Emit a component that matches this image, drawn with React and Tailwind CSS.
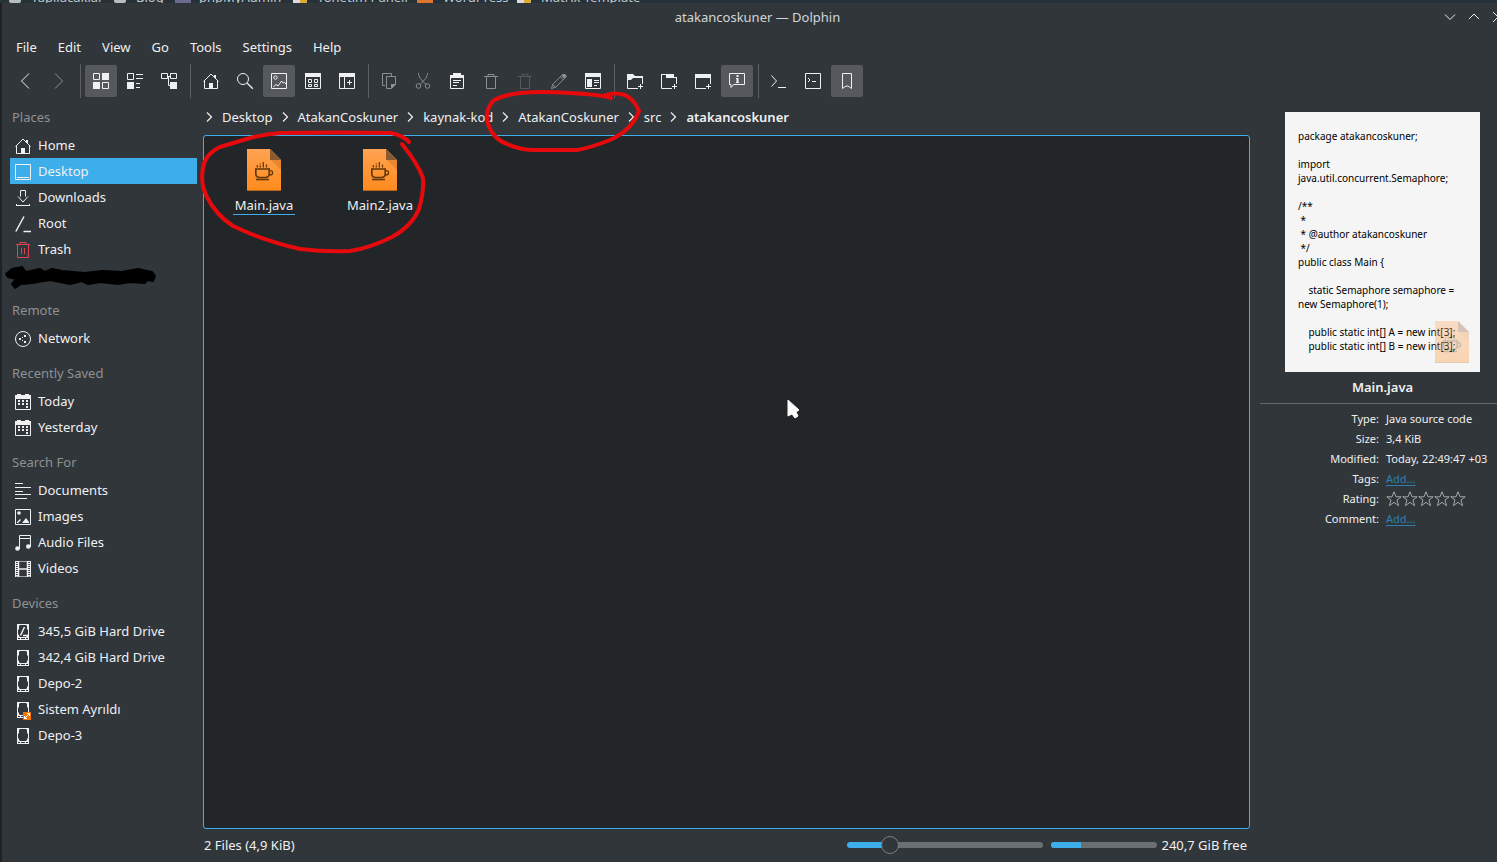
import React from "react";

const P = ({ d, ...rest }) => <path d={d} {...rest} />;
const F = (props) => <path fill="currentColor" stroke="none" {...props} />;

function Icon({ children, className = "" }) {
  return (
    <svg viewBox="0 0 16 16" className={`h-4 w-4 shrink-0 overflow-visible ${className}`} fill="none" stroke="currentColor" strokeWidth="1" aria-hidden="true">
      {children}
    </svg>
  );
}

const art = {
  back: <P d="M12 .5L4.500 8l7.500 7.500" />,
  forward: <P d="M4 .5L11.500 8L4 15.500" />,
  grid: <><P d="M.5 .5h6v6h-6zM9.500 9.500h6v6h-6z" /><F d="M9 0h7v7H9zM0 9h7v7H0z" /></>,
  details: <><P d="M.5 .5h6v6h-6zM9 1.500h7M9 5.500h7M9 10.500h4M9 14.500h4" /><F d="M0 9h7v7H0z" /></>,
  tree: <><P d="M.5 .5h6v5h-6zM9.500 .5h6v5h-6zM6.500 3.500h3M7.500 3.500v9h2" /><F d="M9 9h7v7H9z" /></>,
  home: <><P d="M.5 8.500L8 1l7.500 7.500M1.500 8v7.500h13V8" /><F d="M6 10h4v6H6zM11 2h2v4l-2-2z" /></>,
  search: <><circle cx="6" cy="6" r="5.500" /><P d="M10 10l5.800 5.800" strokeWidth="1.300" /></>,
  preview: <><P d="M.5 .5h15v15H.5zM2.300 14L5 11.500l2 1.500 3.600-5 1.500 2 1.500-.7 1.500 2" /><circle cx="4.500" cy="4.500" r="1.700" /></>,
  groups: <><P d="M.5 .5h15v15H.5zM3.500 6.500h3v3h-3zM9.500 6.500h3v3h-3zM3.500 11.500h3v2h-3zM9.500 11.500h3v2h-3z" /><F d="M0 0h16v4H0z" /></>,
  split: <><P d="M.5 .5h15v15H.5zM5.500 4v12M8 9.500h5M10.500 7v5" /><F d="M0 0h16v4H0z" /></>,
  copy: <><P d="M4 12.500H1.500V.5h9V3M5.500 3.500h9v8l-4 4h-5z" /><F d="M10 11h5l-5 5z" /></>,
  cut: <><P d="M3.500 0c0 4 2.500 6.500 7.500 11.500M12.500 0c0 4-2.500 6.500-7.500 11.500" /><circle cx="3.500" cy="13" r="2.300" /><circle cx="12.500" cy="13" r="2.300" /></>,
  paste: <><P d="M1.500 2.500h13v13h-13zM4 7.500h8M4 9.500h6M4 12.500h4" /><F d="M1 2h3V0h8v2h3v3H1z" /></>,
  trash: <P d="M1 3.500h14M5 3V1.500h6V3M3.500 4v11.500h9V4" />,
  rename: <><P d="M.5 15.500l1.200-4L12 1.200 14.800 4 4.500 14.300zM9.500 4l2.800 2.800M1.700 11.500l2.800 2.800" /><F d="M12 1h2l1.500 1.500v1.500l-2 1.500L10.500 3z" /></>,
  props: <><P d="M.5 .5h15v15H.5zM9 7.500h5M9 9.500h5M9 12.500h3" /><F d="M0 0h16v4H0zM2 6h5v8H2z" /></>,
  newFolder: <><P d="M.5 3v12.500H11M15.500 4v7M11 13.500h5M13.500 11v5M7 3.500h9" /><F d="M0 1h6l2 2h8v2H6L4 7H0z" /></>,
  newTab: <><P d="M.5 1v14.500H11M15.500 4v7M11 13.500h5M13.500 11v5M0 1.500h8" /><F d="M5 1h8v3h3v1H5z" /></>,
  newWindow: <><P d="M.5 1v14.500H11M15.500 4v7M11 13.500h5M13.500 11v5" /><F d="M0 1h16v4H0z" /></>,
  info: <><P d="M.5 .5h15v11h-11L2 14.500v-3H.5zM7 5.500h1.500M7 9.500h3" /><F d="M7.500 2h2v2h-2zM7.500 5h2v5h-2z" /></>,
  prompt: <P d="M.5 2.500L5.500 8l-5 5.500M7 14.500h8" />,
  terminal: <P d="M.5 .5h15v15H.5zM3 5l2 2-2 2M7 8.500h4" />,
  bookmark: <P d="M3.500 .5h9v15l-2-1.500L8 12.800 5.500 14l-2 1.500z" />,
  desktop: <P d="M.5 .5h15v15H.5zM2 13.500h12" />,
  downloads: <P d="M5.500 6.500v-6h5v6M3 6.500l5 5.500 5-5.500M1 15.500h14M1.500 14v2M14.500 14v2" />,
  root: <P d="M.8 15.500L9 .5M8.500 15.500H16" strokeWidth="1.500" />,
  bin: <><P d="M1 2.500h14M5 2V.5h6V2M2.500 3v12.500h11V3M6.500 6v6M9.500 6v6" /></>,
  network: <><circle cx="8" cy="8" r="7.500" /><F d="M4 7h2v2H4zM9 4h2v2H9zM9 10h2v2H9zM7 6h1v1H7zM7 9h1v1H7z" /></>,
  calendar: <><P d="M.5 1.500h15v14H.5z" /><F d="M0 1h2V0h4v1h4V0h4v1h2v4H0zM3 6h2v2H3zM7 6h2v2H7zM11 6h2v2h-2zM3 9h2v2H3zM7 9h2v2H7zM11 9h2v2h-2zM11 12h2v2h-2z" /></>,
  docs: <P d="M0 .5h8M0 4.500h16M0 8.500h8M0 11.500h16M0 15.500h12" />,
  images: <><P d="M.5 .5h15v15H.5z" /><circle cx="4" cy="4" r="1.800" fill="currentColor" stroke="none" /><F d="M2 14v-1l3-3 1 1-3 3zM7 14l4-5 3 4v1z" /></>,
  audio: <><P d="M4.500 14V.5h11V12M5 3.500h10" /><circle cx="2.500" cy="13.500" r="2.300" fill="currentColor" stroke="none" /><circle cx="13.300" cy="11.500" r="2.300" fill="currentColor" stroke="none" /></>,
  video: <><P d="M.5 0v16M15.500 0v16" /><P d="M2 0v16M14 0v16" strokeWidth="2" strokeDasharray="1 1" /><P d="M0 .5h16M0 15.500h16" opacity=".6" /><P d="M3.500 0v16M12.500 0v16M4 8h8" strokeWidth="1.500" /></>,
  drive: <F fillRule="evenodd" d="M2 0h12v16H2zM5 1L4 2v3L3 6v4l1 1v1l1 1h6l1-1v-1l1-1V6l-1-1V2l-1-1zM3 14v1h2v-1zM6 14v1h4v-1zM11 14v1h2v-1z" />,
};

const rootDrive = <>{art.drive}<P d="M5.500 11.500L9.500 3M8 11.500h4" strokeWidth="1.500" /></>;
const mountedDrive = (
  <>
    {art.drive}
    <path d="M8 10h8v8H8z" fill="#f67400" stroke="none" />
    <path d="M9.500 16.500l5-5M12 11.500h2.500v2.500M9.500 14v2.500h2.500" stroke="#fff" />
  </>
);

const browserLinks = [
  ["folder", "Yapılacaklar", "gap-2.5 w-[105px]"],
  ["folder", "Blog", "gap-2.5 w-[61px]"],
  ["pma", "phpMyAdmin", "gap-2 w-[118px]"],
  ["panel", "Yönetim Paneli", "gap-2.5 w-[124px]"],
  ["wp", "WordPress", "gap-2.5 w-[100px]"],
  ["panel", "Matrix Template", "gap-2.5"],
];

function Favicon({ kind }) {
  if (kind === "folder") return <span className="h-[3px] w-3 shrink-0 rounded-b-xs bg-[#b9bdc0]" />;
  if (kind === "pma") return <span className="h-[3px] w-4 shrink-0 bg-[#6c6a8e]" />;
  if (kind === "wp") return <span className="h-[3px] w-4 shrink-0 bg-[#e0752d]" />;
  return (
    <span className="flex h-[3px] w-3.5 shrink-0">
      <span className="w-1/2 bg-[#dcdcdc]" />
      <span className="w-1/2 bg-[#dfa83a]" />
    </span>
  );
}

const toolbar = [
  [["back", "Back"], ["forward", "Forward", "dim"]],
  [["grid", "Icons", "on"], ["details", "Compact"], ["tree", "Details"]],
  [["home", "Home"], ["search", "Find"], ["preview", "Show Previews", "on"], ["groups", "Show in Groups"], ["split", "Split"]],
  [["copy", "Copy", "dim"], ["cut", "Cut", "dim"], ["paste", "Paste"], ["trash", "Move to Trash", "dim"], ["trash", "Delete", "faint"], ["rename", "Rename", "dim"], ["props", "Properties"]],
  [["newFolder", "Create Folder"], ["newTab", "New Tab"], ["newWindow", "New Window"], ["info", "Information", "on"]],
  [["prompt", "Open Terminal"], ["terminal", "Terminal Panel"], ["bookmark", "Places Panel", "on"]],
];

const tone = {
  on: "bg-[#55585c]",
  dim: "text-[#8b8f92]",
  faint: "text-[#55595d]",
};

const places = [
  { title: "Places", items: [["Home", art.home], ["Desktop", art.desktop, "active"], ["Downloads", art.downloads], ["Root", art.root], ["Trash", art.bin, "red"], null] },
  { title: "Remote", items: [["Network", art.network]] },
  { title: "Recently Saved", items: [["Today", art.calendar], ["Yesterday", art.calendar]] },
  { title: "Search For", items: [["Documents", art.docs], ["Images", art.images], ["Audio Files", art.audio], ["Videos", art.video]] },
  { title: "Devices", items: [["345,5 GiB Hard Drive", rootDrive], ["342,4 GiB Hard Drive", art.drive], ["Depo-2", art.drive], ["Sistem Ayrıldı", mountedDrive], ["Depo-3", art.drive]] },
];

const crumbs = ["Desktop", "AtakanCoskuner", "kaynak-kod", "AtakanCoskuner", "src", "atakancoskuner"];

const source = `package atakancoskuner;

import
java.util.concurrent.Semaphore;

/**
 *
 * @author atakancoskuner
 */
public class Main {

    static Semaphore semaphore =
new Semaphore(1);

    public static int[] A = new int[3];
    public static int[] B = new int[3];`;

function JavaIcon({ className = "" }) {
  return (
    <svg viewBox="0 0 34 42" className={`h-[42px] w-[34px] ${className}`} aria-hidden="true">
      <defs>
        <linearGradient id="sheet" x1="0" y1="0" x2="0" y2="1">
          <stop offset="0" stopColor="#ffa353" />
          <stop offset="1" stopColor="#ff8a1c" />
        </linearGradient>
      </defs>
      <path d="M0 0h23l11 11v31H0z" fill="url(#sheet)" />
      <path d="M24 11l10 10V11z" fill="#c96f1c" opacity=".45" />
      <path d="M23 0l11 11H23z" fill="#8b5a30" />
      <path d="M0 41.500h34" stroke="#b9651c" />
      <g fill="none" stroke="#5f3609" strokeWidth="1.600">
        <path d="M8.800 20h13.400v4.500q0 4-4 4h-5.400q-4 0-4-4z" />
        <path d="M22.200 21.800h2q1.300 0 1.300 1.300v.8q0 2-2.500 2h-1" strokeWidth="1.300" />
        <path d="M9 30.500h13" />
        <path d="M10.300 16v2.500M13.300 14.500v1M13.300 16.500v2M16.300 13v5.500M19.500 15.500v3" strokeWidth="1.200" />
      </g>
    </svg>
  );
}

function Sidebar() {
  return (
    <nav className="relative w-[195px] shrink-0 pl-2">
      {places.map((group, i) => (
        <section key={group.title}>
          <h2 className={`pb-[7px] pl-0.5 leading-4 text-[#8e9193] ${i === 0 ? "pt-[11px]" : "pt-3.5"}`}>{group.title}</h2>
          <ul>
            {group.items.map((item, n) => (
              <li key={n} className="h-[26px]">
                {item && (
                  <a href="#" className={`flex h-full items-center gap-[7px] pl-[5px] ${item[2] === "active" ? "bg-[#3daee9]" : ""}`}>
                    <Icon className={`mt-0.5 ${item[2] === "red" ? "text-[#da4453]" : ""}`}>{item[1]}</Icon>
                    <span className="leading-4">{item[0]}</span>
                  </a>
                )}
              </li>
            ))}
          </ul>
        </section>
      ))}
    </nav>
  );
}

function Chevron() {
  return (
    <svg viewBox="0 0 7 12" className="h-3 w-[7px] shrink-0" fill="none" stroke="currentColor" aria-hidden="true">
      <path d="M1 1.500L5.500 6 1 10.500" strokeWidth="1.200" />
    </svg>
  );
}

function InfoPanel() {
  return (
    <aside className="mr-2 ml-2.5 w-[245px] shrink-0 pt-3.5">
      <div className="relative mx-auto h-[260px] w-[195px] bg-[#f5f5f5] px-[13px] pt-[17px] text-[10px] leading-[14px] text-black">
        <pre className="font-['Noto_Sans',sans-serif]">{source}</pre>
        <JavaIcon className="absolute right-[11px] bottom-[9px] opacity-30" />
      </div>
      <h2 className="pt-1.5 pb-[7px] text-center leading-[18px] font-semibold">Main.java</h2>
      <hr className="-mr-2 border-[#64686b]" />
      <dl className="grid grid-cols-[119px_1fr] gap-x-[7px] pt-[5px] text-[11px] leading-5">
        <dt className="text-right">Type:</dt>
        <dd>Java source code</dd>
        <dt className="text-right">Size:</dt>
        <dd>3,4 KiB</dd>
        <dt className="text-right">Modified:</dt>
        <dd className="whitespace-nowrap">Today, 22:49:47 +03</dd>
        <dt className="text-right">Tags:</dt>
        <dd><a href="#" className="text-[#2f7fad] underline underline-offset-2">Add...</a></dd>
        <dt className="text-right">Rating:</dt>
        <dd className="flex items-center">
          {[1, 2, 3, 4, 5].map((n) => (
            <button key={n} aria-label={`${n} stars`}>
              <Icon className="text-[#a5a8aa]">
                <P d="M8 .8l2 5h5.200l-4.200 3.200 1.600 5.700L8 11.300l-4.600 3.400L5 9 .8 5.800H6z" />
              </Icon>
            </button>
          ))}
        </dd>
        <dt className="text-right">Comment:</dt>
        <dd><a href="#" className="text-[#2f7fad] underline underline-offset-2">Add...</a></dd>
      </dl>
    </aside>
  );
}

export default function App() {
  return (
    <div className="relative flex min-h-screen flex-col overflow-hidden bg-[#1f2225] font-['Noto_Sans',sans-serif] text-[13px] text-[#eff0f1]">
      <div className="flex h-[3px] items-end overflow-hidden bg-[#26323a] pl-[9px] leading-3 text-[#c3c8cb]">
        {browserLinks.map(([kind, label, cls]) => (
          <a key={label} href="#" className={`flex shrink-0 items-end whitespace-nowrap ${cls}`}>
            <Favicon kind={kind} />
            {label}
          </a>
        ))}
      </div>

      <div className="-mr-4 ml-0.5 flex grow flex-col bg-[#31363b]">
        <header className="grid h-7 grid-cols-[1fr_auto_1fr] items-center">
          <span />
          <h1 className="leading-[18px] text-[#d3d6d8]">atakancoskuner — Dolphin</h1>
          <div className="flex justify-end gap-2 pr-[7px]">
            <button aria-label="Minimize"><Icon><P d="M3 5.500l5 5 5-5" /></Icon></button>
            <button aria-label="Maximize"><Icon><P d="M3 10l5-5 5 5" /></Icon></button>
            <button aria-label="Close"><Icon><P d="M3 3l10 10M13 3L3 13" /></Icon></button>
          </div>
        </header>

        <div role="menubar" className="flex h-8 items-center gap-px pl-1">
          {["File", "Edit", "View", "Go", "Tools", "Settings", "Help"].map((m) => (
            <button key={m} role="menuitem" className="px-2.5 leading-[18px]">{m}</button>
          ))}
        </div>

        <div role="toolbar" className="flex h-[35px] items-center gap-0.5 pl-[7px]">
          {toolbar.map((group, i) => (
            <React.Fragment key={i}>
              {i > 0 && <span className="flex h-[34px] w-1.5 justify-center"><span className="w-px bg-[#5c6063]" /></span>}
              {group.map(([name, label, state]) => (
                <button key={label} aria-label={label} aria-pressed={state === "on"} className={`grid size-8 shrink-0 place-items-center rounded-xs ${tone[state] || ""}`}>
                  <Icon>{art[name]}</Icon>
                </button>
              ))}
            </React.Fragment>
          ))}
        </div>

        <div className="flex grow">
          <Sidebar />
          <main className="ml-1.5 flex min-w-0 grow flex-col">
            <nav className="flex h-[37px] items-center gap-[9px] pl-[3px]">
              {crumbs.map((c, i) => (
                <React.Fragment key={i}>
                  <Chevron />
                  <a href="#" className={`leading-[18px] ${i === crumbs.length - 1 ? "font-semibold" : ""}`}>{c}</a>
                </React.Fragment>
              ))}
            </nav>
            <div className="flex grow items-start rounded-[3px] border border-[#3daee9] bg-[#232629] pt-[13px] pl-0.5">
              {["Main.java", "Main2.java"].map((name, i) => (
                <button key={name} className="flex w-[116px] flex-col items-center gap-[5px]">
                  <JavaIcon />
                  <span className={`border-b px-0.5 leading-[18px] ${i === 0 ? "border-[#3daee9]" : "border-transparent"}`}>{name}</span>
                </button>
              ))}
            </div>
            <footer className="flex h-[33px] items-center pr-[3px] pb-0.5 pl-px">
              <span className="grow leading-[18px]">2 Files (4,9 KiB)</span>
              <input
                type="range"
                aria-label="Zoom"
                min="0"
                max="16"
                defaultValue="3"
                className="h-[18px] w-[196px] appearance-none bg-transparent [&::-webkit-slider-runnable-track]:h-1.5 [&::-webkit-slider-runnable-track]:rounded-full [&::-webkit-slider-runnable-track]:bg-[linear-gradient(to_right,#3daee9_21%,#6b6f72_21%)] [&::-webkit-slider-thumb]:-mt-1.5 [&::-webkit-slider-thumb]:size-[18px] [&::-webkit-slider-thumb]:appearance-none [&::-webkit-slider-thumb]:rounded-full [&::-webkit-slider-thumb]:border [&::-webkit-slider-thumb]:border-[#7b7f82] [&::-webkit-slider-thumb]:bg-[#31363b]"
              />
              <progress
                aria-label="Disk usage"
                value="28"
                max="100"
                className="mr-1 ml-2 h-1.5 w-[106px] appearance-none overflow-hidden rounded-full [&::-webkit-progress-bar]:bg-[#6b6f72] [&::-webkit-progress-value]:bg-[#3daee9]"
              />
              <span className="leading-[18px]">240,7 GiB free</span>
            </footer>
          </main>
          <InfoPanel />
        </div>
      </div>

      <svg className="pointer-events-none absolute top-0 left-0 h-[430px] w-[800px]" viewBox="0 0 800 430" fill="none" aria-hidden="true">
        <g stroke="#e60a0c" strokeWidth="4" strokeLinecap="round" strokeLinejoin="round">
          <path d="M409 142Q404 136 391 133Q340 132 280 133Q265 134 250 138L220 147Q205 154 203 168Q200 183 207 197Q216 215 233 226Q262 240 300 249Q325 252 350 251Q370 248 392 237Q412 226 419 209Q424 192 423 178Q418 164 402 144" />
          <path d="M611 98Q604 95 570 93Q540 91 520 93Q503 95 493 101Q484 112 488 124Q493 139 507 144Q520 150 535 150H577Q590 148 610 140Q632 130 639 111Q634 99 625 95Q615 92 606 95" />
        </g>
        <path d="M6 274L12 269 22 267 26 272 40 269 45 272 52 269 62 271 85 273 102 271 122 272 138 269 147 271 152 272 155 276 153 281 147 280 145 283 130 282 118 284 100 282 88 284 82 281 70 284 60 282 50 280 32 283 21 284 15 288 12 284 16 279 8 277Z" fill="#000" stroke="#000" strokeWidth="2" strokeLinejoin="round" />
        <path d="M788 400v16l4-2 3 4 3-2-2-4 3-2z" fill="#fcfcfc" stroke="#fcfcfc" />
      </svg>
    </div>
  );
}
